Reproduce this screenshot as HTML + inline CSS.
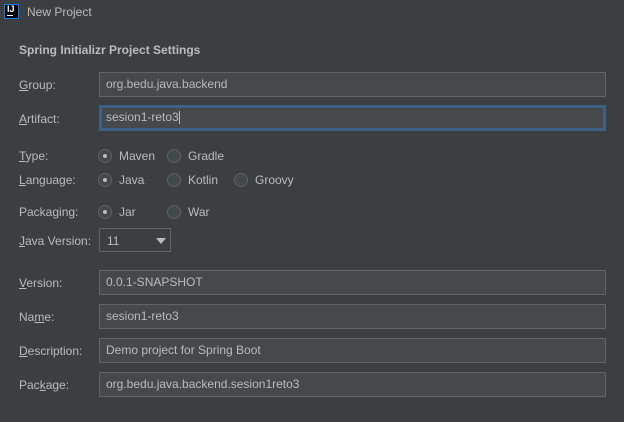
<!DOCTYPE html>
<html><head><style>
*{margin:0;padding:0;box-sizing:border-box}
body{width:624px;height:422px;background:#3c3f41;font-family:"Liberation Sans",sans-serif;font-size:12px;color:#bbbbbb;position:relative;overflow:hidden}
.a{position:absolute;white-space:nowrap}
.f{position:absolute;left:99px;width:507px;height:25px;background:#45494a;border:1px solid #646464;padding-left:6px;line-height:23px;color:#bbbbbb}
.foc{border:3px solid #3d6185;padding-left:4px;line-height:19px}
.r{position:absolute;width:14px;height:14px;border-radius:50%;border:1px solid #5e6060;background:#43494a}
.r.on::after{content:"";position:absolute;left:4px;top:4px;width:4px;height:4px;border-radius:50%;background:#bbbbbb}
u{text-decoration:underline}
</style></head><body>
<div class="a" style="left:4px;top:4px;width:15px;height:15px;background:#000;border:1px solid #087cfa"><span style="position:absolute;left:2px;top:-1px;color:#fff;font-size:9px;font-weight:bold">IJ</span><span style="position:absolute;left:2px;top:10px;width:6px;height:1px;background:#fff"></span></div>
<div class="a" style="left:27px;top:5px;font-size:12px">New Project</div>
<div class="a" style="left:19px;top:43px;font-weight:bold">Spring Initializr Project Settings</div>

<div class="a" style="left:19px;top:78px"><u>G</u>roup:</div>
<div class="f" style="top:72px">org.bedu.java.backend</div>
<div class="a" style="left:19px;top:112px"><u>A</u>rtifact:</div>
<div class="f foc" style="top:105px;height:26px">sesion1-reto3<span style="display:inline-block;width:1px;height:13px;background:#bbb;vertical-align:middle"></span></div>

<div class="a" style="left:19px;top:149px"><u>T</u>ype:</div>
<div class="r on" style="left:98px;top:149px"></div><div class="a" style="left:119px;top:149px">Maven</div>
<div class="r" style="left:167px;top:149px"></div><div class="a" style="left:188px;top:149px">Gradle</div>

<div class="a" style="left:19px;top:173px"><u>L</u>anguage:</div>
<div class="r on" style="left:98px;top:173px"></div><div class="a" style="left:119px;top:173px">Java</div>
<div class="r" style="left:167px;top:173px"></div><div class="a" style="left:188px;top:173px">Kotlin</div>
<div class="r" style="left:234px;top:173px"></div><div class="a" style="left:255px;top:173px">Groovy</div>

<div class="a" style="left:19px;top:205px">Packa<u>g</u>ing:</div>
<div class="r on" style="left:98px;top:205px"></div><div class="a" style="left:119px;top:205px">Jar</div>
<div class="r" style="left:167px;top:205px"></div><div class="a" style="left:188px;top:205px">War</div>

<div class="a" style="left:19px;top:234px"><u>J</u>ava Version:</div>
<div class="a" style="left:99px;top:228px;width:72px;height:24px;border:1px solid #646464;background:#3c3f41"><span style="position:absolute;left:7px;top:5px">11</span><span style="position:absolute;left:56px;top:9px;width:0;height:0;border-left:5px solid transparent;border-right:5px solid transparent;border-top:6px solid #bbb"></span></div>

<div class="a" style="left:19px;top:276px"><u>V</u>ersion:</div>
<div class="f" style="top:270px">0.0.1-SNAPSHOT</div>
<div class="a" style="left:19px;top:310px">Na<u>m</u>e:</div>
<div class="f" style="top:304px">sesion1-reto3</div>
<div class="a" style="left:19px;top:344px"><u>D</u>escription:</div>
<div class="f" style="top:338px">Demo project for Spring Boot</div>
<div class="a" style="left:19px;top:378px">Pac<u>k</u>age:</div>
<div class="f" style="top:372px">org.bedu.java.backend.sesion1reto3</div>
</body></html>
